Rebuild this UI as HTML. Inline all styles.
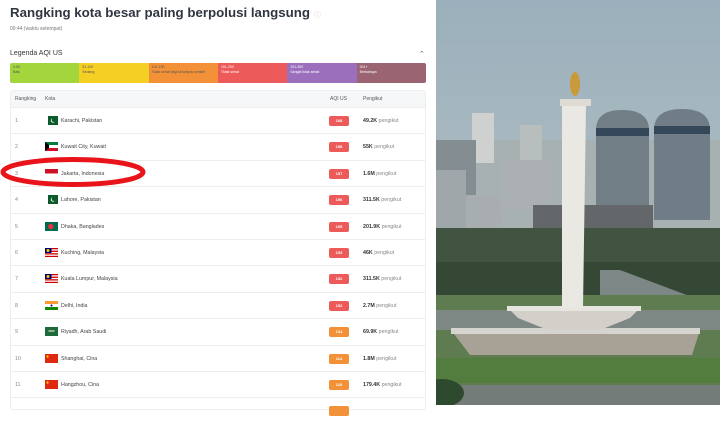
<!DOCTYPE html>
<html><head><meta charset="utf-8"><style>
*{margin:0;padding:0;box-sizing:border-box}
body{width:720px;height:405px;overflow:hidden;background:#fff;font-family:"Liberation Sans",sans-serif;position:relative}
.l{position:absolute;left:0;top:0;width:436px;height:405px;background:#fff}
.t{position:absolute;left:10px;top:5px;font-size:13.3px;font-weight:bold;color:#2f3640;white-space:nowrap}
.s{position:absolute;left:10px;top:26px;font-size:5px;color:#777}
.lg{position:absolute;left:10px;top:50px;font-size:7px;color:#333}
.car{position:absolute;left:419px;top:50px;font-size:7px;color:#666}
.bar{position:absolute;left:10px;top:63px;width:416px;height:20px;display:flex;border-radius:2px;overflow:hidden}
.bar div{flex:1;font-size:3.5px;padding:2px 3px;line-height:5px;color:#555}
.tb{position:absolute;left:10px;top:90px;width:416px;height:320px;border:1px solid #eee;border-radius:3px}
.hd{position:absolute;left:0;top:0;width:100%;height:16px;background:#f6f7f8;font-size:5px;color:#555}
.hd span{position:absolute;top:5px}
.r{position:absolute;left:0;width:100%;height:26.4px;border-top:1px solid #eee;font-size:5.3px;color:#444}
.r span{position:absolute;top:10px}
.n{left:4px;color:#888}
.f{position:absolute;left:34px;top:8px;width:13px;height:9px}
.c{left:50px}
.b{position:absolute;left:318px;top:8px;width:20px;height:10px;border-radius:2px;color:#fff;font-size:4px;text-align:center;line-height:10px;font-weight:bold}
.p{left:352px}
.p b{font-weight:bold;color:#333}
.p i{font-style:normal;color:#888}
</style></head><body>
<div class="l">
<div class="t">Rangking kota besar paling berpolusi langsung <span style="font-size:7px;color:#ccc;font-weight:normal">ⓘ</span></div>
<div class="s">09:44 (waktu setempat)</div>
<div class="lg">Legenda AQI US</div>
<div class="car">⌃</div>
<div class="bar">
<div style="background:#a3d53c">0-50<br>Baik</div>
<div style="background:#f5cf24">51-100<br>Sedang</div>
<div style="background:#f29137">101-150<br>Tidak sehat bagi kelompok sensitif</div>
<div style="background:#ec5a5a;color:#fff">151-200<br>Tidak sehat</div>
<div style="background:#9c6fbd;color:#fff">201-300<br>Sangat tidak sehat</div>
<div style="background:#9b6472;color:#fff">301+<br>Berbahaya</div>
</div>
<div class="tb">
<div class="hd"><span style="left:4px">Rangking</span><span style="left:34px">Kota</span><span style="left:319px">AQI US</span><span style="left:352px">Pengikut</span></div>
<div class="r" style="top:16px"><span class="n">1</span><svg class="f" viewBox="0 0 13 9"><rect width="13" height="9" fill="#0b5a2a"/><rect width="3" height="9" fill="#fff"/><circle cx="8" cy="4.5" r="2.2" fill="#fff"/><circle cx="8.7" cy="4" r="2" fill="#0b5a2a"/></svg><span class="c">Karachi, Pakistan</span><div class="b" style="background:#ec5a5a">168</div><span class="p"><b>49.2K</b> <i>pengikut</i></span></div>
<div class="r" style="top:42.4px"><span class="n">2</span><svg class="f" viewBox="0 0 13 9"><rect width="13" height="3" fill="#007a3d"/><rect y="3" width="13" height="3" fill="#fff"/><rect y="6" width="13" height="3" fill="#ce1126"/><polygon points="0,0 4,3 4,6 0,9" fill="#000"/></svg><span class="c">Kuwait City, Kuwait</span><div class="b" style="background:#ec5a5a">158</div><span class="p"><b>55K</b> <i>pengikut</i></span></div>
<div class="r" style="top:68.8px"><span class="n">3</span><svg class="f" viewBox="0 0 13 9"><rect width="13" height="4.5" fill="#ce1126"/><rect y="4.5" width="13" height="4.5" fill="#fff"/></svg><span class="c">Jakarta, Indonesia</span><div class="b" style="background:#ec5a5a">157</div><span class="p"><b>1.6M</b> <i>pengikut</i></span></div>
<div class="r" style="top:95.2px"><span class="n">4</span><svg class="f" viewBox="0 0 13 9"><rect width="13" height="9" fill="#0b5a2a"/><rect width="3" height="9" fill="#fff"/><circle cx="8" cy="4.5" r="2.2" fill="#fff"/><circle cx="8.7" cy="4" r="2" fill="#0b5a2a"/></svg><span class="c">Lahore, Pakistan</span><div class="b" style="background:#ec5a5a">156</div><span class="p"><b>311.5K</b> <i>pengikut</i></span></div>
<div class="r" style="top:121.6px"><span class="n">5</span><svg class="f" viewBox="0 0 13 9"><rect width="13" height="9" fill="#006a4e"/><circle cx="5.8" cy="4.5" r="2.6" fill="#f42a41"/></svg><span class="c">Dhaka, Banglades</span><div class="b" style="background:#ec5a5a">155</div><span class="p"><b>201.9K</b> <i>pengikut</i></span></div>
<div class="r" style="top:148px"><span class="n">6</span><svg class="f" viewBox="0 0 13 9"><rect width="13" height="9" fill="#fff"/><rect y="0" width="13" height="1.3" fill="#cc0001"/><rect y="2.6" width="13" height="1.3" fill="#cc0001"/><rect y="5.2" width="13" height="1.3" fill="#cc0001"/><rect y="7.8" width="13" height="1.2" fill="#cc0001"/><rect width="6.5" height="5" fill="#010066"/><circle cx="3" cy="2.5" r="1.5" fill="#fc0"/></svg><span class="c">Kuching, Malaysia</span><div class="b" style="background:#ec5a5a">153</div><span class="p"><b>46K</b> <i>pengikut</i></span></div>
<div class="r" style="top:174.4px"><span class="n">7</span><svg class="f" viewBox="0 0 13 9"><rect width="13" height="9" fill="#fff"/><rect y="0" width="13" height="1.3" fill="#cc0001"/><rect y="2.6" width="13" height="1.3" fill="#cc0001"/><rect y="5.2" width="13" height="1.3" fill="#cc0001"/><rect y="7.8" width="13" height="1.2" fill="#cc0001"/><rect width="6.5" height="5" fill="#010066"/><circle cx="3" cy="2.5" r="1.5" fill="#fc0"/></svg><span class="c">Kuala Lumpur, Malaysia</span><div class="b" style="background:#ec5a5a">152</div><span class="p"><b>311.5K</b> <i>pengikut</i></span></div>
<div class="r" style="top:200.8px"><span class="n">8</span><svg class="f" viewBox="0 0 13 9"><rect width="13" height="3" fill="#f93"/><rect y="3" width="13" height="3" fill="#fff"/><rect y="6" width="13" height="3" fill="#128807"/><circle cx="6.5" cy="4.5" r="1" fill="#008"/></svg><span class="c">Delhi, India</span><div class="b" style="background:#ec5a5a">152</div><span class="p"><b>2.7M</b> <i>pengikut</i></span></div>
<div class="r" style="top:227.2px"><span class="n">9</span><svg class="f" viewBox="0 0 13 9"><rect width="13" height="9" fill="#1c6b38"/><rect x="3.5" y="3.5" width="6" height="1" fill="#fff"/></svg><span class="c">Riyadh, Arab Saudi</span><div class="b" style="background:#f29137">134</div><span class="p"><b>69.9K</b> <i>pengikut</i></span></div>
<div class="r" style="top:253.6px"><span class="n">10</span><svg class="f" viewBox="0 0 13 9"><rect width="13" height="9" fill="#de2910"/><circle cx="2.5" cy="2.5" r="1.1" fill="#ffde00"/></svg><span class="c">Shanghai, Cina</span><div class="b" style="background:#f29137">114</div><span class="p"><b>1.8M</b> <i>pengikut</i></span></div>
<div class="r" style="top:280px"><span class="n">11</span><svg class="f" viewBox="0 0 13 9"><rect width="13" height="9" fill="#de2910"/><circle cx="2.5" cy="2.5" r="1.1" fill="#ffde00"/></svg><span class="c">Hangzhou, Cina</span><div class="b" style="background:#f29137">110</div><span class="p"><b>179.4K</b> <i>pengikut</i></span></div>
<div class="r" style="top:306.4px"><div class="b" style="background:#f29137"></div></div>
</div>
<svg style="position:absolute;left:0;top:0" width="160" height="200"><ellipse cx="73" cy="172" rx="70" ry="12.5" fill="none" stroke="#e8141a" stroke-width="5"/></svg>
</div>
<svg style="position:absolute;left:436px;top:0" width="284" height="405" viewBox="436 0 284 405">
<defs><linearGradient id="sky" x1="0" y1="0" x2="0" y2="1"><stop offset="0" stop-color="#9bb0bc"/><stop offset="1" stop-color="#bcc5c5"/></linearGradient></defs>
<rect x="436" y="0" width="284" height="405" fill="url(#sky)"/>
<rect x="436" y="140" width="284" height="100" fill="#a8b1b2"/>
<rect x="472" y="113" width="22" height="50" fill="#cfd1d0"/>
<rect x="520" y="125" width="22" height="40" fill="#b8bdbe"/>
<rect x="436" y="140" width="40" height="95" fill="#838d92"/>
<rect x="436" y="170" width="30" height="65" fill="#a0a7aa"/>
<rect x="466" y="195" width="36" height="40" fill="#a8adaf"/>
<rect x="500" y="160" width="50" height="50" fill="#abb1b3"/>
<path d="M596 130 Q596 110 622 110 Q649 110 649 130 L649 210 L596 210Z" fill="#717e86"/>
<path d="M654 130 Q654 109 682 109 Q710 109 710 130 L710 220 L654 220Z" fill="#707d86"/>
<rect x="596" y="128" width="53" height="8" fill="#34485a"/>
<rect x="654" y="126" width="56" height="8" fill="#34485a"/>
<rect x="533" y="205" width="120" height="25" fill="#64676a"/>
<rect x="436" y="228" width="284" height="70" fill="#415441"/>
<rect x="436" y="262" width="284" height="33" fill="#354836"/>
<path d="M600 270 L620 270 L700 300 L600 300Z" fill="#7d8786"/>
<rect x="436" y="295" width="284" height="110" fill="#5e7c50"/>
<rect x="436" y="310" width="284" height="20" fill="#7d8784"/>
<rect x="436" y="385" width="284" height="20" fill="#747c7a"/>
<rect x="436" y="358" width="284" height="25" fill="#527d3f"/>
<polygon points="451,330 700,330 692,355 470,355" fill="#a8a196"/>
<rect x="451" y="328" width="249" height="6" fill="#d6d4cf"/>
<polygon points="507,307 641,307 630,318 600,330 548,330 518,318" fill="#d3d0c9"/>
<rect x="507" y="306" width="134" height="5" fill="#e7e5e0"/>
<polygon points="562,105 586,105 583,308 562,308" fill="#eae8e2"/>
<rect x="560" y="99" width="31" height="7" fill="#dfdbd4"/>
<ellipse cx="575" cy="84" rx="5" ry="12" fill="#c99a3a"/>
<ellipse cx="442" cy="393" rx="22" ry="14" fill="#2e4a2e"/>
</svg>
</body></html>
